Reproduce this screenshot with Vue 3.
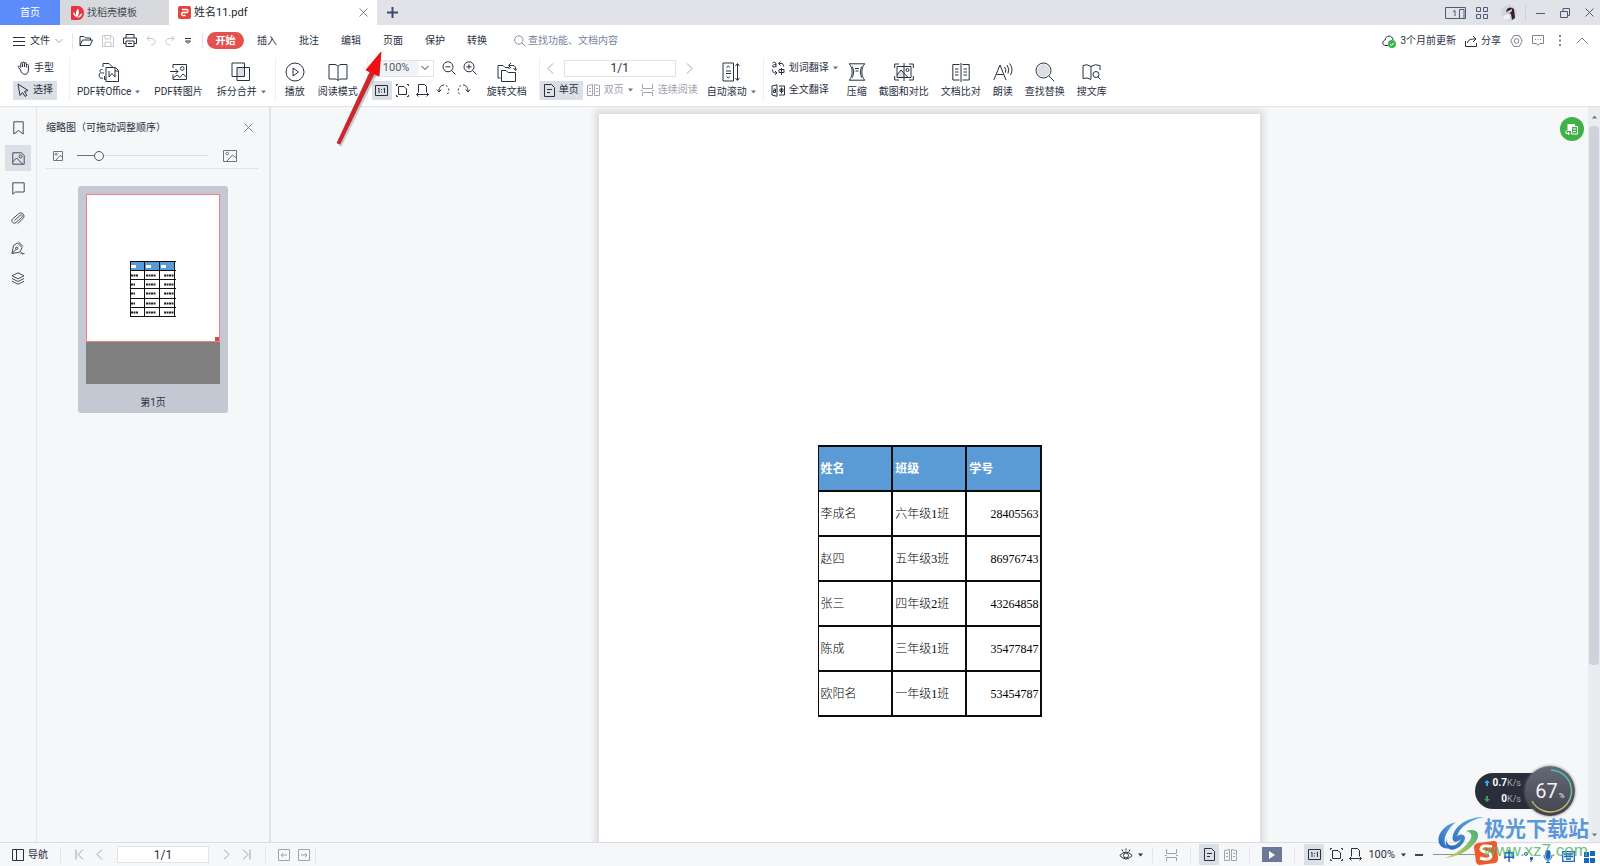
<script setup>
import { h, ref } from 'vue'

const shapes = {
  menu: [12, 10, 'M0 1.5H12M0 5.5H12M0 9.5H12'],
  chevron: [8, 6, 'M.5 1L4 4.5 7.500 1'],
  caret: [5, 4, '', 'M0 .5H5L2.500 3.500Z'],
  open: [14, 12, 'M1 10.500V1.500H5L6.500 3H11.500V5M1 10.500L3.500 5H13.500L11 10.500Z'],
  save: [12, 12, 'M.5 .5H9L11.500 3V11.500H.5ZM3 .5V4H8.500V.5M3 11V7H9V11'],
  print: [14, 13, 'M3 4V.5H11V4M3 9.500H.5V4H13.500V9.500H11M3 7H11V12.500H3ZM5 9.500H9'],
  undo: [10, 11, 'M3.500 1L1 3.500 3.500 6M1 3.500H6C10.500 4 10 10 5 10'],
  redo: [10, 11, 'M6.500 1L9 3.500 6.500 6M9 3.500H4C-.5 4 0 10 5 10'],
  more: [8, 8, 'M1 1.500H7M1.500 4L4 6.500 6.500 4Z'],
  search: [12, 12, 'M9 5A4.200 4.200 0 1 1 .6 5A4.200 4.200 0 1 1 9 5M8 8L11.500 11.500'],
  hand: [13, 14, 'M3.500 9L1.500 6.500C.5 5.500 1.800 4.600 2.700 5.500L3.800 6.500V2.500C4 1.300 5.500 1.300 5.600 2.500V6M5.600 2C5.800 .5 7.400 .5 7.500 2V6M7.500 2.500C7.700 1.400 9.300 1.400 9.400 2.500V6.500M9.400 4C9.800 3 11.300 3.200 11.400 4.300V9C11.400 15 4.500 14.500 3.500 9'],
  pointer: [12, 14, 'M1 1L3 12.500 5.500 9.500 8 13.500 9.800 12.300 7.600 8.500 11 7.500Z'],
  office: [22, 21, 'M8 17.500H6.500V14M5 1.500H11L14.500 5M5 1.500V5M8 5.500H17.500L20.500 8.500V19.500H8ZM11 9V15L14 11.500 17 15V9M4.500 7.500C1 7 1 11 4.500 11H6M2 11C0 14 2 17.500 5 16M17 5.500V9H20'],
  picture: [18, 18, 'M3 5V1.500H16.500V16.500H3V11.500M0 8.500H8M5.500 6L8 8.500 5.500 11M3 15L7 12 10 14.500 13 11 16.500 14M14 5.500A1.800 1.800 0 1 1 10.400 5.500A1.800 1.800 0 1 1 14 5.500'],
  split: [20, 20, 'M6 14.500H1V1H13.500V14.500H6M6 5.500H18.500V18.500H6Z', '', 'M6 5.500H13.500V14.500H6Z'],
  play: [20, 20, 'M19 10A9 9 0 1 1 1 10A9 9 0 1 1 19 10M8 6V14L13.500 10Z'],
  book: [20, 19, 'M10 3.500Q9 1.500 7 1.500H1V16H7Q9 16 10 17.500Q11 16 13 16H19V1.500H13Q11 1.500 10 3.500V17.500'],
  zoomout: [14, 14, 'M11 5.800A5 5 0 1 1 1 5.800A5 5 0 1 1 11 5.800M9.500 9.500L13.500 13.500M3.500 5.800H8.500'],
  zoomin: [14, 14, 'M11 5.800A5 5 0 1 1 1 5.800A5 5 0 1 1 11 5.800M9.500 9.500L13.500 13.500M3.500 5.800H8.500M6 3.300V8.300'],
  actual: [13, 11, 'M.5 .5H12.500V10.500H.5ZM3 4L4 3.200V8M8.500 4L9.500 3.200V8M6.500 4V5M6.500 6.500V7.500'],
  fitpage: [13, 13, 'M2.500 2.500H8L10.500 5V10.500H2.500ZM.5 2V.5H2M11 .5H12.500V2M.5 11V12.500H2M11 12.500H12.500V11'],
  fitwidth: [13, 13, 'M2.500 8V.5H8.500L10.500 2.500V8M.5 10.500H12.500M2.500 8.500L.5 10.500 2.500 12.500M10.500 8.500L12.500 10.500 10.500 12.500'],
  rotl: [14, 12, 'M.8 5.500L3 8 5.500 5.500M3 7.500C3 3 5.500 1 8 1M10 1.500L11.500 2.500M12.500 4.500L13 6.500M12.500 8.500L11.500 10'],
  rotr: [14, 12, 'M13.200 5.500L11 8 8.500 5.500M11 7.500C11 3 8.500 1 6 1M4 1.500L2.500 2.500M1.500 4.500L1 6.500M1.500 8.500L2.500 10'],
  rotate: [20, 21, 'M3.500 16H1V3.500H6L8 5.500H12V7M4.500 8.500H9L11 10.500H18.500V19.500H4.500ZM12 3.500H16C18 3.500 18.500 5 18.500 7.500M14 1L11.500 3.500 14 6M16.500 6L18.500 8.500 20 6.500'],
  prev: [7, 11, 'M6 .5L1 5.500 6 10.500'],
  next: [7, 11, 'M1 .5L6 5.500 1 10.500'],
  first: [9, 11, 'M1 .5V10.500M8 .5L3 5.500 8 10.500'],
  last: [9, 11, 'M8 .5V10.500M1 .5L6 5.500 1 10.500'],
  single: [11, 13, 'M.5 .5H7.500L10.500 3.500V12.500H.5ZM3 5.500H8M3 8.500H6'],
  double: [13, 12, 'M.5 1.500L5.500 .5V11.500H.5ZM12.500 1.500L7.500 .5V11.500H12.500ZM2 4.500H4M2 7.500H4M9 4.500H11M9 7.500H11'],
  cont: [13, 12, 'M1.500 0V4.500H11.500V0M1.500 12V8.500H11.500V12M0 6.500H2M11 6.500H13'],
  scroll: [18, 20, 'M1 1H11.500V19H1ZM4 9H9M4 11.500H9M4.500 5.500L6.300 4 8 5.500M4.500 14.500L6.300 16 8 14.500M15.500 2V18M13.500 4L15.500 1.500 17.500 4M13.500 16L15.500 18.500 17.500 16'],
  word: [14, 14, 'M1.500 2C3 .8 5 1 5 3V6M5 3.500C1 3.500 .5 6 3 6Q4.500 6 5 5M8 2.500H11Q12.500 3 12.500 5.500M9.500 .5L7.500 2.500 9.500 4.500M8 8.500H13V11.500H8ZM10.500 7V14M1.500 8.500C1.500 11.500 2.500 12 5.500 12M4 10L6 12 4 13.800'],
  full: [14, 13, 'M6 .8L1 2V11L6 12.300ZM8 2H13.500V11H8M2.500 5H4.500V8.500H2.500V6.500H4.500M9 5H12V7.500H9ZM10.500 3.500V9.500'],
  compress: [18, 18, 'M1 .8H17M1 17.200H17M1.500 1C5 5 5 13 1.500 17M16.500 1C13 5 13 13 16.500 17M4.500 3.500Q7 9 4.500 14.500M13.500 3.500Q11 9 13.500 14.500M7 5.500H11M7.500 8H10.500'],
  capture: [20, 18, 'M.7 5V1H5M15 1H19.300V5M.7 13V17H5M15 17H19.300V13M3 3.500H17V14.500H3ZM10 0V18M3 12L7 7 14 14.500M15 7A1.500 1.500 0 1 1 12 7A1.500 1.500 0 1 1 15 7', '', 'M3 12L7 7 10 10V14.500H3Z'],
  compare: [18, 19, 'M9 0V19M7.500 1.500H.8V17H7.500M10.500 1.500H17.200V17H10.500M3 6H6.500M3 9H6.500M3 12H6.500M11.500 6H15M11.500 9H15M11.500 12H15'],
  read: [20, 18, 'M.8 17L7 2L13 17M3.500 11.500H10.500M11.500 4Q13.500 6.500 12.500 9.500M14 2Q17 6 15 10.500M16.500 .5Q21 6 17.500 12'],
  find: [20, 20, 'M16 8.500A7.500 7.500 0 1 1 1 8.500A7.500 7.500 0 1 1 16 8.500M14 14L19.300 19.300', '', 'M15 8.500A6.500 6.500 0 1 1 2 8.500A6.500 6.500 0 1 1 15 8.500'],
  library: [19, 18, 'M9 3.500Q5 .5 1 2.500V15.500Q5 14 9 16.500M9 16V3.500Q13 .5 18 2.500V7M17 11.500A3 3 0 1 1 11 11.500A3 3 0 1 1 17 11.500M16 14L18.500 16.500'],
  cloud: [14, 12, 'M6 10.500H4C-.5 10.500 .2 5.500 3.200 5C3.500 0 10.500 -.5 11 5'],
  share: [12, 12, 'M.5 6V11.500H11.500V8M2.500 8C3 4.500 6 4 10.500 4M8 1L11 4 8 7'],
  gear: [13, 12, 'M3.700 .6H9.300L12.200 6 9.300 11.400H3.700L.8 6ZM8.800 6A2.300 2.300 0 1 1 4.200 6A2.300 2.300 0 1 1 8.800 6'],
  chat: [12, 11, 'M.5 .5H11.500V8.500H7.500L6 10.500 4.500 8.500H.5ZM3 4.500H4M5.500 4.500H6.500M8 4.500H9'],
  dots: [2, 11, '', 'M0 0H2V2H0ZM0 4.500H2V6.500H0ZM0 9H2V11H0Z'],
  up: [12, 7, 'M.5 6.500L6 1 11.500 6.500'],
  window: [21, 12, 'M.5 .5H20.500V11.500H.5ZM14.500 2.500H19V11.500H14.500ZM8 4.500L10 3.500V9'],
  grid: [12, 12, 'M.5 .5H4.500V4.500H.5ZM7.500 .5H11.500V4.500H7.500ZM.5 7.500H4.500V11.500H.5ZM7.500 7.500H11.500V11.500H7.500Z'],
  min: [9, 10, 'M0 5.500H9'],
  restore: [10, 10, 'M.5 3.500H7.500V9.500H.5ZM3 3V.5H9.500V7.500H8'],
  close: [9, 9, 'M.5 .5L8.500 8.500M8.500 .5L.5 8.500'],
  plus: [11, 11, 'M5.500 0V11M0 5.500H11'],
  bookmark: [11, 14, 'M.8 .8H10.200V13L5.500 9.500 .8 13Z'],
  thumbs: [13, 13, 'M.8 .8H9.500L12.200 3.500V12.200H.8ZM1 9.500L4.500 6 10.500 12M10 4.500A1.500 1.500 0 1 1 7 4.500A1.500 1.500 0 1 1 10 4.500'],
  comment: [13, 13, 'M.8 .8H12.200V10H3.500L.8 12.200Z'],
  clip: [14, 13, 'M3.500 8.500L9 3.500C10.500 2 12 4 10.800 5.200L5 10.500C2.500 12.500-.5 9.500 1.500 7L7.500 1.800C10.500-.8 15 3 12 6.500L6.500 11.800'],
  pen: [14, 14, 'M7.500 .8L12 5.500M6.500 2L11 6.500 9 11 1 12.500 2.500 4.500ZM1 12.500L5 8.200M7 7.300A1.200 1.200 0 1 1 4.600 7.300A1.200 1.200 0 1 1 7 7.300M9.500 12.500L11 11.500V13L13.500 12.500'],
  layers: [14, 13, 'M7 .8L13 3.800 7 6.800 1 3.800ZM1 6.500L7 9.500 13 6.500M1 9.200L7 12.200 13 9.200'],
  pics: [10, 10, 'M.5 .5H9.500V9.500H.5ZM3 9L7 4.500 9.500 6M4.200 3.200A1 1 0 1 1 2.200 3.200A1 1 0 1 1 4.200 3.200'],
  picl: [14, 12, 'M.5 .5H13.500V11.500H.5ZM4 11L9.500 5 13.500 8M5.500 3.500A1.300 1.300 0 1 1 2.900 3.500A1.300 1.300 0 1 1 5.500 3.500'],
  nav: [12, 12, 'M.5 .5H11.500V11.500H.5ZM4.500 .5V11.500'],
  back: [12, 12, 'M.5 .5H11.500V11.500H.5ZM3 6H9M5 4L3 6 5 8'],
  fwd: [12, 12, 'M.5 .5H11.500V11.500H.5ZM3 6H9M7 4L9 6 7 8'],
  eye: [14, 13, 'M.8 7.500Q7 .5 13.200 7.500Q7 14.500 .8 7.500ZM9.500 7.500A2.500 2.500 0 1 1 4.500 7.500A2.500 2.500 0 1 1 9.500 7.500M7 .5V2.500M3 1.500L4 3.500M11 1.500L10 3.500'],
  rise: [6, 6, '', 'M3 0L6 3H4V6H2V3H0Z'],
  fall: [6, 6, '', 'M3 6L6 3H4V0H2V3H0Z'],
}

const Icon = ({ name }) => {
  const [w, ht, line, solid, tint] = shapes[name]
  return h('svg', { width: w, height: ht, viewBox: `0 0 ${w} ${ht}`, fill: 'none', 'aria-hidden': 'true' }, [
    tint ? h('path', { d: tint, fill: '#dcdfe5' }) : null,
    line ? h('path', { d: line, stroke: 'currentColor', 'stroke-width': 1 }) : null,
    solid ? h('path', { d: solid, fill: 'currentColor' }) : null,
  ])
}
Icon.props = ['name']

const quick = [
  { icon: 'open', label: '打开' },
  { icon: 'save', label: '保存', off: true },
  { icon: 'print', label: '打印' },
  { icon: 'undo', label: '撤销', off: true },
  { icon: 'redo', label: '恢复', off: true },
  { icon: 'more', label: '更多' },
]
const menus = ['开始', '插入', '批注', '编辑', '页面', '保护', '转换']
const convert = [
  { icon: 'office', label: 'PDF转Office', caret: true },
  { icon: 'picture', label: 'PDF转图片' },
  { icon: 'split', label: '拆分合并', caret: true },
]
const reading = [
  { icon: 'play', label: '播放' },
  { icon: 'book', label: '阅读模式' },
]
const fits = [
  { icon: 'fitpage', label: '适合页面' },
  { icon: 'fitwidth', label: '适合宽度' },
  { icon: 'rotl', label: '向左旋转' },
  { icon: 'rotr', label: '向右旋转' },
]
const tools = [
  { icon: 'compress', label: '压缩' },
  { icon: 'capture', label: '截图和对比' },
  { icon: 'compare', label: '文档比对' },
  { icon: 'read', label: '朗读' },
  { icon: 'find', label: '查找替换' },
  { icon: 'library', label: '搜文库' },
]
const side = [
  { icon: 'bookmark', label: '书签' },
  { icon: 'thumbs', label: '缩略图' },
  { icon: 'comment', label: '批注' },
  { icon: 'clip', label: '附件' },
  { icon: 'pen', label: '签名' },
  { icon: 'layers', label: '图层' },
]
const rows = [
  ['李成名', '六年级1班', '28405563'],
  ['赵四', '五年级3班', '86976743'],
  ['张三', '四年级2班', '43264858'],
  ['陈成', '三年级1班', '35477847'],
  ['欧阳名', '一年级1班', '53454787'],
]
const thumbSize = ref(14)
const pageNo = ref('1/1')
</script>

<template>
  <div class="app">
    <header>
      <div class="titlebar">
        <button class="tab home">首页</button>
        <button class="tab docer">
          <svg width="13" height="14" viewBox="0 0 13 14" aria-hidden="true">
            <path d="M1 0H7A6 7 0 0 1 7 14H1Q0 14 0 13V1Q0 0 1 0Z" fill="#e5343f" />
            <path d="M6 12C4 9 5 5 7 2.500C8.500 5 8 9 6 12ZM5 11C3 10 2 8 2 6C4 7 5 9 5 11ZM7 12C8 10 9 8 11 7C11 9.500 9.500 11.500 7 12Z" fill="#fff" />
          </svg>
          <span>找稻壳模板</span>
        </button>
        <div class="tab current">
          <svg width="13" height="13" viewBox="0 0 13 13" aria-hidden="true">
            <rect width="13" height="13" rx="2" fill="#e0453f" />
            <path d="M4 3.500H8.500Q10 3.500 10 5T8.500 6.500H5Q3.500 6.500 3.500 8T5 9.500H7.500" fill="none" stroke="#fff" stroke-width="1.300" />
          </svg>
          <span class="grow">姓名11.pdf</span>
          <button class="muted" aria-label="关闭标签"><Icon name="close" /></button>
        </div>
        <button class="add" aria-label="新建标签"><Icon name="plus" /></button>
        <div class="window">
          <button aria-label="窗口"><Icon name="window" /></button>
          <button aria-label="应用"><Icon name="grid" /></button>
          <svg class="avatar" width="16" height="16" viewBox="0 0 16 16" role="img" aria-label="头像">
            <circle cx="8" cy="8" r="8" fill="#cfd8df" />
            <path d="M6 4Q9 1 13 4L14 13 11 15 10 9 5 7Z" fill="#29242c" />
            <path d="M5 7L11 4 11 6 7 10Z" fill="#e8b7b3" />
            <path d="M2 11L8 9 9 14Q5 16 2 13Z" fill="#eef4f4" />
          </svg>
          <i class="rule"></i>
          <button aria-label="最小化"><Icon name="min" /></button>
          <button aria-label="还原"><Icon name="restore" /></button>
          <button aria-label="关闭"><Icon name="close" /></button>
        </div>
      </div>

      <div class="menubar">
        <button class="file"><Icon name="menu" />文件<Icon name="chevron" class="faint" /></button>
        <i class="rule"></i>
        <div class="quick">
          <button v-for="q in quick" :key="q.icon" :aria-label="q.label" :class="{ off: q.off }"><Icon :name="q.icon" /></button>
        </div>
        <i class="rule"></i>
        <nav>
          <button v-for="(m, i) in menus" :key="m" :class="{ start: i === 0 }">{{ m }}</button>
        </nav>
        <label class="search"><Icon name="search" /><input placeholder="查找功能、文档内容" aria-label="查找功能、文档内容" /></label>
        <div class="account">
          <button class="pair">
            <span class="sync"><Icon name="cloud" /><svg class="ok" width="8" height="8" viewBox="0 0 8 8" aria-hidden="true"><circle cx="4" cy="4" r="4" fill="#38b64a" /><path d="M2 4L3.500 5.500 6 2.800" stroke="#fff" fill="none" /></svg></span>3个月前更新
          </button>
          <button class="pair share"><Icon name="share" />分享</button>
          <button class="muted" aria-label="设置"><Icon name="gear" /></button>
          <button class="muted" aria-label="反馈"><Icon name="chat" /></button>
          <button class="muted dots" aria-label="更多"><Icon name="dots" /></button>
          <button class="muted" aria-label="收起"><Icon name="up" /></button>
        </div>
      </div>

      <div class="ribbon">
        <div class="stack modes">
          <button class="small"><Icon name="hand" />手型</button>
          <button class="small on"><Icon name="pointer" />选择</button>
        </div>
        <i class="rule"></i>
        <div class="group">
          <button v-for="b in convert" :key="b.icon" class="big">
            <Icon :name="b.icon" /><span>{{ b.label }}<Icon v-if="b.caret" name="caret" class="drop" /></span>
          </button>
        </div>
        <i class="rule"></i>
        <div class="group reading">
          <button v-for="b in reading" :key="b.icon" class="big"><Icon :name="b.icon" /><span>{{ b.label }}</span></button>
        </div>
        <i class="rule"></i>
        <div class="stack zoom">
          <div class="line">
            <label class="pick">
              <select aria-label="缩放比例"><option>100%</option></select>
              <span class="arrowbox"><Icon name="chevron" /></span>
            </label>
            <button aria-label="缩小"><Icon name="zoomout" /></button>
            <button aria-label="放大"><Icon name="zoomin" /></button>
          </div>
          <div class="line fits">
            <button class="square on" aria-label="实际大小"><Icon name="actual" /></button>
            <button v-for="f in fits" :key="f.icon" :aria-label="f.label"><Icon :name="f.icon" /></button>
          </div>
        </div>
        <button class="big rotate"><Icon name="rotate" /><span>旋转文档</span></button>
        <i class="rule"></i>
        <div class="stack pages">
          <div class="line pager">
            <button class="faint" aria-label="上一页"><Icon name="prev" /></button>
            <input v-model="pageNo" aria-label="页码" />
            <button class="faint" aria-label="下一页"><Icon name="next" /></button>
          </div>
          <div class="line views">
            <button class="small on"><Icon name="single" />单页</button>
            <button class="small dim"><Icon name="double" />双页<Icon name="caret" class="tight" /></button>
            <button class="small dim"><Icon name="cont" />连续阅读</button>
          </div>
        </div>
        <button class="big auto"><Icon name="scroll" /><span>自动滚动<Icon name="caret" class="drop" /></span></button>
        <i class="rule"></i>
        <div class="stack trans">
          <button class="small"><Icon name="word" />划词翻译<Icon name="caret" class="tight" /></button>
          <button class="small"><Icon name="full" />全文翻译</button>
        </div>
        <div class="group tools">
          <button v-for="b in tools" :key="b.icon" class="big"><Icon :name="b.icon" /><span>{{ b.label }}</span></button>
        </div>
      </div>
    </header>

    <main>
      <aside class="rail">
        <button v-for="(s, i) in side" :key="s.icon" :aria-label="s.label" :class="{ on: i === 1 }"><Icon :name="s.icon" /></button>
      </aside>
      <section class="panel">
        <div class="head"><h2>缩略图（可拖动调整顺序）</h2><button class="muted" aria-label="关闭面板"><Icon name="close" /></button></div>
        <div class="sizer">
          <Icon name="pics" />
          <input v-model="thumbSize" type="range" min="0" max="100" aria-label="缩略图大小" />
          <Icon name="picl" />
        </div>
        <button class="thumb">
          <span class="sheet">
            <span class="view">
              <svg width="46" height="56" viewBox="0 0 46 56" aria-hidden="true">
                <path d="M0 0H45V10H0Z" fill="#5b9bd5" />
                <path d="M.5 0V56M14.500 0V56M29.500 0V56M44.500 0V56M0 .5H46M0 9.500H46M0 18.500H46M0 27.500H46M0 37.500H46M0 46.500H46M0 55.500H46" stroke="#111" />
                <path d="M1 5.500H6M16 5.500H21M31 5.500H36" stroke="#fff" stroke-width="3" />
                <path d="M1 14.500H8M16 14.500H26M34 14.500H44M1 23.500H5M16 23.500H26M34 23.500H44M1 32.500H5M16 32.500H26M34 32.500H44M1 42.500H5M16 42.500H26M34 42.500H44M1 51.500H8M16 51.500H26M34 51.500H44" stroke="#222" stroke-width="2" stroke-dasharray="2 .5" />
              </svg>
            </span>
            <span class="rest"></span>
          </span>
          <span>第1页</span>
        </button>
      </section>
      <div class="canvas">
        <article class="page">
          <table>
            <thead><tr><th>姓名</th><th>班级</th><th>学号</th></tr></thead>
            <tbody>
              <tr v-for="r in rows" :key="r[0]"><td v-for="c in r" :key="c">{{ c }}</td></tr>
            </tbody>
          </table>
        </article>
        <button class="float" aria-label="转换">
          <svg width="24" height="24" viewBox="0 0 24 24" aria-hidden="true">
            <circle cx="12" cy="12" r="12" fill="#42b049" />
            <path d="M7.500 7H15V9H11V14H7.500Z" fill="#fff" />
            <path d="M11.500 9.500H17.500V17H11.500ZM13 12H16M13 14.500H16" stroke="#fff" fill="none" />
            <path d="M6 13.500V16.500H9.500M8 15L9.500 16.500 8 18" stroke="#fff" fill="none" />
          </svg>
        </button>
      </div>
      <div class="scroll">
        <svg width="5" height="4" viewBox="0 0 5 4" aria-hidden="true"><path d="M0 3.500H5L2.500 .5Z" fill="#6f7583" /></svg>
        <div class="track"><div class="knob"></div></div>
        <svg width="5" height="4" viewBox="0 0 5 4" aria-hidden="true"><path d="M0 .5H5L2.500 3.500Z" fill="#6f7583" /></svg>
      </div>
    </main>

    <footer>
      <button class="pair navb"><Icon name="nav" />导航</button>
      <i class="rule"></i>
      <div class="jump">
        <button class="faint" aria-label="首页"><Icon name="first" /></button>
        <button class="faint" aria-label="上一页"><Icon name="prev" /></button>
        <input v-model="pageNo" aria-label="当前页" />
        <button class="faint" aria-label="下一页"><Icon name="next" /></button>
        <button class="faint" aria-label="末页"><Icon name="last" /></button>
      </div>
      <i class="rule"></i>
      <div class="hist">
        <button class="faint" aria-label="后退"><Icon name="back" /></button>
        <button class="faint" aria-label="前进"><Icon name="fwd" /></button>
      </div>
      <i class="rule"></i>
      <div class="status">
        <button class="eye" aria-label="护眼"><Icon name="eye" /><Icon name="caret" /></button>
        <i class="rule"></i>
        <button class="faint" aria-label="连续"><Icon name="cont" /></button>
        <i class="rule"></i>
        <div class="duo">
          <button class="square on" aria-label="单页"><Icon name="single" /></button>
          <button class="faint" aria-label="双页"><Icon name="double" /></button>
        </div>
        <i class="rule"></i>
        <button class="run" aria-label="播放"><svg width="6" height="8" viewBox="0 0 6 8" aria-hidden="true"><path d="M0 0V8L6 4Z" fill="#fff" /></svg></button>
        <i class="rule"></i>
        <div class="scale">
          <button class="square on" aria-label="实际大小"><Icon name="actual" /></button>
          <button aria-label="适合页面"><Icon name="fitpage" /></button>
          <button aria-label="适合宽度"><Icon name="fitwidth" /></button>
          <button class="pct">100%<Icon name="caret" /></button>
          <button class="minus" aria-label="缩小"></button>
        </div>
        <i class="groove"></i>
      </div>
    </footer>

    <svg class="callout" width="60" height="110" viewBox="0 0 60 110" aria-hidden="true">
      <path d="M5 100L40 29" stroke="#9a9a9a" stroke-width="3" opacity=".5" />
      <path d="M2 97L35 26 31 24 46 6 44 30 39 28 5 98Z" fill="#d3242b" stroke="#ad2027" stroke-width=".7" />
      <path d="M31 24L46 6 44 30Z" fill="#f40d12" />
    </svg>

    <div class="speed">
      <div class="rates">
        <div><Icon name="rise" class="rise" />0.7<small>K/s</small></div>
        <div><Icon name="fall" class="fall" />0<small>K/s</small></div>
      </div>
      <div class="dial">
        <svg width="50" height="50" viewBox="0 0 50 50" aria-hidden="true">
          <defs>
            <linearGradient id="ring" x1="0" y1="0" x2="0" y2="1"><stop offset="0" stop-color="#45c4b4" /><stop offset=".6" stop-color="#6cc08a" /><stop offset="1" stop-color="#d8bd4a" /></linearGradient>
            <linearGradient id="face" x1="0" y1="0" x2="0" y2="1"><stop offset="0" stop-color="#666976" /><stop offset="1" stop-color="#41444f" /></linearGradient>
          </defs>
          <circle cx="25" cy="25" r="25" fill="url(#face)" />
          <path d="M26 4A21 21 0 1 1 7 35" fill="none" stroke="url(#ring)" stroke-width="1.500" />
        </svg>
        <span>67<small>%</small></span>
      </div>
    </div>

    <div class="tray">
      <span>中</span>
      <svg width="10" height="12" viewBox="0 0 10 12" aria-hidden="true"><circle cx="2" cy="3" r="1.500" fill="none" stroke="#1767c2" /><path d="M6 6H9V8L7 11H6L7 9H6Z" fill="#1767c2" /></svg>
      <svg width="10" height="13" viewBox="0 0 10 13" aria-hidden="true"><rect x="2.500" width="5" height="9" rx="2.500" fill="#1767c2" /><path d="M1 5Q1 10 5 10T9 5M5 10V13M3 12.500H7" stroke="#1767c2" fill="none" /></svg>
      <svg width="13" height="11" viewBox="0 0 13 11" aria-hidden="true"><path d="M.7 .7H12.300V10.300H.7ZM2 3H11M2 5.500H11M4 8H9M4.500 2V6.500M8.500 2V6.500" stroke="#1767c2" stroke-width="1.300" fill="none" /></svg>
      <svg width="11" height="12" viewBox="0 0 11 12" aria-hidden="true"><path d="M0 1H5V6H0ZM6 0H11V5H6ZM0 7H5V12H0ZM6 7H11V12H6Z" fill="#1767c2" /></svg>
    </div>
    <svg class="sogou" width="26" height="26" viewBox="0 0 26 26" aria-hidden="true">
      <path d="M5 3L21 1Q24 1 24 4L25 19Q25 22 22 23L7 25Q4 25 3 22L1 7Q1 4 5 3Z" fill="#ee5a2a" />
      <path d="M19 7Q9 4 8 9C8 13 18 11 18 16Q17 21 7 18" stroke="#fff" stroke-width="3" fill="none" />
    </svg>
    <div class="brand">
      <svg width="46" height="42" viewBox="0 0 46 42" aria-hidden="true">
        <defs>
          <linearGradient id="blue" x1="0" y1="1" x2="1" y2="0"><stop offset="0" stop-color="#2b66b8" /><stop offset="1" stop-color="#5fb0e6" /></linearGradient>
          <linearGradient id="green" x1="0" y1="1" x2="1" y2="0"><stop offset="0" stop-color="#c6d64a" /><stop offset="1" stop-color="#4fae7c" /></linearGradient>
        </defs>
        <path d="M46 0C30 0 18 8 15 18C13 25 18 27 23 22C18 32 6 30 9 20C4 34 17 37 25 26C31 18 22 15 19 20C21 10 32 3 46 0Z" fill="url(#blue)" />
        <path d="M12 7C2 12-2 22 2 28C4 31 8 32 12 31C4 29 4 17 18 5Z" fill="url(#blue)" />
        <path d="M28 14C40 10 44 18 36 27C29 35 18 40 7 41C18 37 28 30 32 23C35 18 33 15 28 14Z" fill="url(#green)" />
      </svg>
      <div><strong>极光下载站</strong><em>www.xz7.com</em></div>
    </div>
  </div>
</template>

<style>
body { margin: 0; }
</style>

<style scoped>
.app {
  position: relative; display: flex; flex-direction: column; min-height: 100vh; overflow: hidden;
  background: #f5f7f9; color: #29303f;
  font: 10px/14px Roboto, "Noto Sans CJK SC", sans-serif;
}
* { box-sizing: border-box; }
button, input, select { font: inherit; color: inherit; border: 0; padding: 0; margin: 0; background: none; border-radius: 0; outline: 0; }
button { display: flex; align-items: center; justify-content: center; flex: none; white-space: nowrap; }
svg { display: block; flex: none; }
.rule { width: 1px; height: 16px; background: #e3e5ea; flex: none; }
.muted { color: #7c8391; }
.faint { color: #9da2ad; }
.grow { flex: 1; text-align: left; }
.on { background: #dbe0e7; }
.pair { gap: 4px; }

.titlebar { display: flex; height: 25px; background: #e1e3e8; }
.tab { height: 25px; }
.home { width: 60px; background: #5b8cf9; color: #fff; }
.docer { width: 109px; justify-content: flex-start; gap: 3px; padding-left: 11px; background: #d8d9dc; color: #444a56; }
.current { display: flex; align-items: center; width: 208px; padding: 0 9px; gap: 3px; background: #fff; color: #20242e; }
.add { width: 30px; color: #3d4a6b; }
.add :deep(path) { stroke-width: 2; }
.current .grow { font-size: 11px; }
.window { display: flex; align-items: center; margin-left: auto; padding-right: 6px; color: #4e5a79; gap: 10px; }
.avatar { margin: 0 -2px 0 3px; }
.window .rule { background: #d0d3da; }
.window button:nth-of-type(n + 4) { margin-left: 5px; }

.menubar { display: flex; align-items: center; height: 31px; background: #fff; padding: 0 12px 0 13px; }
.file { gap: 5px; margin-right: 9px; }
.quick { display: flex; align-items: center; gap: 9px; padding: 0 10px 0 6px; }
.quick .off { color: #c3c7ce; }
nav { display: flex; margin-left: 4px; }
nav button { width: 42px; height: 17px; }
nav .start { width: 37px; margin-right: 2px; border-radius: 9px; background: #e4514f; color: #fff; font-weight: 700; }
.search { display: flex; align-items: center; gap: 2px; margin-left: 16px; color: #8490a8; }
.search input { width: 120px; }
.search input::placeholder { color: #77839b; opacity: 1; }
.account { display: flex; align-items: center; gap: 9px; margin-left: auto; }
.sync { position: relative; }
.ok { position: absolute; right: 0; bottom: -1px; }
.dots { margin: 0 6px; }

.ribbon { display: flex; align-items: center; height: 51px; padding: 0 13px 4px; background: #fff; border-bottom: 1px solid #dfe2e6; }
.ribbon > .rule { height: 43px; background: #eff0f3; }
.stack { display: flex; flex-direction: column; gap: 3px; align-items: flex-start; }
.line { display: flex; align-items: center; height: 19px; }
.small { height: 19px; gap: 4px; padding: 0 4px; }
.modes { margin-right: 11px; }
.dim { color: #9ea3ad; }
.group { display: flex; gap: 14px; padding: 0 9px 0 7px; }
.big { flex-direction: column; justify-content: space-between; height: 39px; }
.big > svg { margin: auto 0; }
.big span { display: flex; align-items: center; gap: 4px; }
.drop, .tight { color: #6c7382; }
.reading { gap: 13px; padding: 0 9px; }
.zoom { margin-left: 4px; }
.zoom .line:first-child { gap: 7px; }
.pick { display: flex; width: 61px; height: 17px; margin: 0 1px; border: 1px solid #e0e3e8; background: #f1f3f6; }
.pick select { flex: 1; appearance: none; padding-left: 9px; color: #555c6a; font-size: 11px; }
.arrowbox { display: flex; align-items: center; justify-content: center; width: 15px; background: #fff; }
.fits { gap: 7px; }
.square { width: 20px; height: 19px; }
.fits .square { margin-right: -3px; }
.rotate { margin: 0 12px 0 10px; }
.pager { gap: 10px; padding-left: 7px; }
.pager input, .jump input { width: 112px; height: 17px; border: 1px solid #e0e3e8; background: #fff; text-align: center; font-size: 12px; }
.auto { margin: 0 7px 0 5px; }
.trans { margin-left: 3px; }
.tools { gap: 12px; padding: 0 5px; }

main { display: flex; flex: 1; }
.rail { display: flex; flex-direction: column; gap: 4px; width: 37px; padding: 8px 5px; border-right: 1px solid #e4e7eb; color: #444b59; }
.rail button { width: 26px; height: 26px; border-radius: 1px; }
.panel { width: 234px; padding: 12px 11px 0 9px; border-right: 2px solid #e0e3e8; }
.head { display: flex; justify-content: space-between; align-items: center; padding-right: 5px; height: 17px; }
h2 { margin: 0; font: inherit; }
.sizer { display: flex; align-items: center; height: 33px; padding: 7px 21px 0 7px; gap: 14px; border-bottom: 1px solid #dfe2e7; color: #6c7382; }
.sizer input { flex: 1; min-width: 0; height: 12px; appearance: none; background: linear-gradient(90deg, #6c7382 0 20px, #dde0e5 20px) center / 100% 1px no-repeat; }
.sizer input::-webkit-slider-thumb { appearance: none; width: 10px; height: 10px; border: 1px solid #4e5563; border-radius: 50%; background: #f5f7f9; }
.thumb { flex-direction: column; justify-content: flex-start; width: 150px; height: 227px; margin: 17px 0 0 32px; padding-top: 8px; gap: 12px; border-radius: 3px; background: #c4c8d3; }
.sheet { display: flex; flex-direction: column; width: 134px; }
.view { position: relative; display: flex; justify-content: center; height: 148px; padding-top: 66px; background: #fff; border: 1px solid #f08080; }
.view::after { content: ""; position: absolute; right: 0; bottom: 0; width: 4px; height: 4px; background: #c95050; }
.rest { height: 42px; background: #808080; }
.canvas { position: relative; display: flex; justify-content: center; flex: 1; padding-top: 7px; overflow: hidden; }
.page { width: 661px; max-width: 100%; padding-top: 331px; background: #fff; box-shadow: 0 0 6px 4px #dadcdf; }
table { margin: 0 auto; width: 224px; table-layout: fixed; border-collapse: collapse; font: 12px/16px "Liberation Serif", "Noto Sans CJK SC", serif; color: #000; }
th, td { height: 45px; padding: 0 1px 0 2px; border: 2px solid #0c0c0c; text-align: left; font-weight: 300; }
th { background: #5b9bd5; color: #fff; font-weight: 700; }
th:first-child, td:first-child { border-left-width: 1px; }
td:last-child { text-align: right; }
.float { position: absolute; right: 4px; top: 10px; }
.scroll { display: flex; flex-direction: column; align-items: center; width: 12px; padding: 8px 1px 5px; gap: 7px; background: #eaecf0; }
.track { flex: 1; align-self: stretch; }
.knob { height: 77%; border-radius: 4px; background: #ced2db; }

footer { display: flex; align-items: center; height: 24px; border-top: 1px solid #dadde3; background: #f5f7f9; }
.navb { margin: 0 12px; }
.jump { display: flex; align-items: center; gap: 12px; padding: 0 14px; }
.jump input { width: 92px; margin: 0 2px; }
.hist { display: flex; gap: 8px; padding: 0 5px 0 12px; }
.status { display: flex; align-items: center; margin-left: auto; gap: 12px; }
.status .eye { gap: 5px; margin-right: -3px; }
.duo { display: flex; align-items: center; gap: 5px; margin: 0 0 0 -4px; }
.run { width: 20px; height: 15px; background: #6d7797; }
.scale { display: flex; align-items: center; gap: 6px; margin-left: -3px; }
.pct { gap: 6px; font-size: 11px; }
.status .square { height: 21px; }
.minus { width: 8px; height: 2px; margin-left: 3px; background: #3d4452; }
.groove { width: 167px; height: 1px; margin-left: -2px; background: #8b909c; }

.callout { position: absolute; left: 335px; top: 46px; }
.speed { position: absolute; right: 25px; bottom: 50px; display: flex; align-items: center; }
.rates { display: flex; flex-direction: column; justify-content: space-between; width: 76px; height: 36px; padding: 2px 30px 2px 9px; margin-right: -26px; border-radius: 18px 0 0 18px; background: #2a2e3a; color: #fff; font-weight: 700; line-height: 16px; }
.rates div { display: flex; align-items: center; justify-content: flex-end; }
.rates svg { margin-right: auto; }
.rates small { font-size: 9px; font-weight: 400; color: #a3a7b0; }
.rise { color: #45a7e0; }
.fall { color: #3da35a; }
.dial { position: relative; width: 50px; height: 50px; border-radius: 50%; box-shadow: 0 0 3px #777; }
.dial span { position: absolute; inset: 0; display: flex; align-items: center; justify-content: center; color: #f2f3f5; font-size: 20px; }
.dial small { font-size: 8px; padding-top: 9px; margin-left: 1px; }
.tray { position: absolute; right: 0; bottom: 0; display: flex; align-items: center; justify-content: space-between; width: 120px; height: 22px; padding: 3px 5px 0 23px; background: #fff; color: #1767c2; font-size: 12px; font-weight: 700; }
.brand { position: absolute; right: 9px; bottom: 6px; display: flex; }
.brand div { display: flex; flex-direction: column; width: 107px; }
.brand strong { color: #5b97da; font-size: 21px; line-height: 25px; font-weight: 700; white-space: nowrap; }
.brand em { color: #57b56b; opacity: .85; font: 17px/18px "Liberation Sans", sans-serif; }
.sogou { position: absolute; right: 101px; bottom: 0; }
</style>
